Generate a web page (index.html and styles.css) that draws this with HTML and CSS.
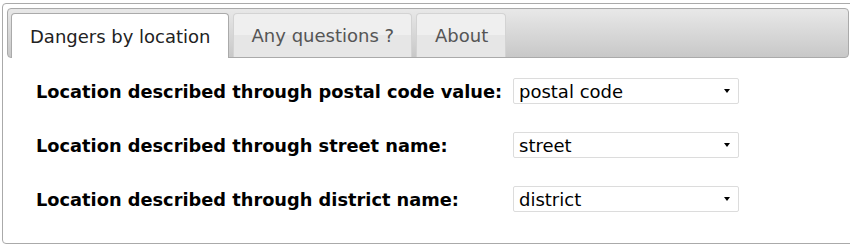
FILE: index.html
```html
<!DOCTYPE html>
<html>

<head>
    <title>Dangers</title>
    <link rel="stylesheet" href="styles.css">
</head>

<body>
    <div class="tabs">
        <ul class="tab-nav">
            <li class="tab active">Dangers by location</li>
            <li class="tab">Any questions ?</li>
            <li class="tab">About</li>
        </ul>

        <div class="panel">
            <div class="row">
                <label class="label">Location described through postal code value:</label>
                <div class="select">postal code<span class="arrow"></span></div>
            </div>
            <div class="row">
                <label class="label">Location described through street name:</label>
                <div class="select">street<span class="arrow"></span></div>
            </div>
            <div class="row">
                <label class="label">Location described through district name:</label>
                <div class="select">district<span class="arrow"></span></div>
            </div>
        </div>
    </div>
</body>

</html>
```

FILE: styles.css
```css
body {
    margin: 0;
    padding: 3px 0 0 2px;
    font-family: "DejaVu Sans", Verdana, sans-serif;
    background-color: #ffffff;
    overflow: hidden;
}

.tabs {
    width: 852px;
    height: 241px;
    border: 1px solid #aaaaaa;
    border-radius: 4px;
    padding: 4px;
    box-sizing: border-box;
    background-color: #ffffff;
}

.tab-nav {
    display: flex;
    gap: 4px;
    margin: 0;
    padding: 4px 0 0 3px;
    list-style: none;
    height: 44px;
    border: 1px solid #aaaaaa;
    border-radius: 4px;
    background: linear-gradient(#e8e8e8, #c8c8c8);
}

.tab {
    display: flex;
    align-items: center;
    padding: 0 17px 0 18px;
    font-size: 18px;
    color: #555555;
    border: 1px solid #d3d3d3;
    border-bottom: none;
    border-radius: 4px 4px 0 0;
    background: linear-gradient(#efefef 50%, #e6e6e6 50%);
}

.tab.active {
    color: #222222;
    background: #ffffff;
    border-color: #aaaaaa;
    margin-bottom: -1px;
}

.panel {
    padding: 6px 0 0 29px;
}

.row {
    display: flex;
    align-items: center;
    height: 54px;
}

.label {
    width: 477px;
    font-weight: bold;
    font-size: 17.8px;
    color: #000000;
}

.select {
    display: flex;
    align-items: center;
    justify-content: space-between;
    width: 226px;
    height: 26px;
    padding: 0 8px 0 5px;
    box-sizing: border-box;
    border: 1px solid #dcdcdc;
    border-radius: 2px;
    font-size: 18px;
    color: #000000;
}

.arrow {
    width: 0;
    height: 0;
    border-left: 3px solid transparent;
    border-right: 3px solid transparent;
    border-top: 4px solid #000000;
}
```
